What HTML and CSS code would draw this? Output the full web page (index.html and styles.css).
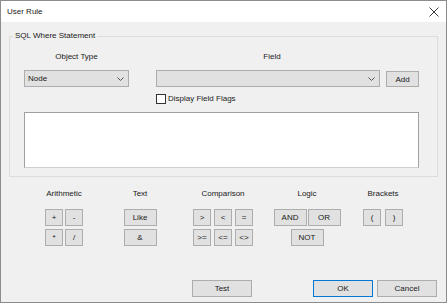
FILE: index.html
```html
<!DOCTYPE html>
<html lang="en">
<head>
    <meta charset="UTF-8">
    <title>User Rule</title>
    <link rel="stylesheet" href="styles.css">
</head>
<body>
    <div class="window">
        <div class="titlebar">
            <span class="title">User Rule</span>
            <svg class="close" width="10" height="10" viewBox="0 0 10 10">
                <path d="M0.5 0.5L9.5 9.5M9.5 0.5L0.5 9.5" stroke="#3a3a3a" stroke-width="1" fill="none"/>
            </svg>
        </div>
        <div class="content">
            <fieldset class="group">
                <legend>SQL Where Statement</legend>
                <div class="labels">
                    <span class="lbl-type">Object Type</span>
                    <span class="lbl-field">Field</span>
                </div>
                <div class="combos">
                    <div class="combo type">
                        <span>Node</span>
                        <svg width="7" height="4" viewBox="0 0 7 4"><path d="M0.5 0.5L3.5 3.5L6.5 0.5" stroke="#555" fill="none"/></svg>
                    </div>
                    <div class="combo field">
                        <span></span>
                        <svg width="7" height="4" viewBox="0 0 7 4"><path d="M0.5 0.5L3.5 3.5L6.5 0.5" stroke="#555" fill="none"/></svg>
                    </div>
                    <button class="btn add">Add</button>
                </div>
                <label class="flags"><span class="check"></span>Display Field Flags</label>
                <div class="sqlbox"></div>
            </fieldset>

            <div class="ops">
                <div class="op-group arith">
                    <p class="op-title">Arithmetic</p>
                    <div class="op-grid cols-2">
                        <button class="btn op">+</button>
                        <button class="btn op">-</button>
                        <button class="btn op">*</button>
                        <button class="btn op">/</button>
                    </div>
                </div>
                <div class="op-group text">
                    <p class="op-title">Text</p>
                    <div class="op-grid cols-1">
                        <button class="btn wide">Like</button>
                        <button class="btn wide">&amp;</button>
                    </div>
                </div>
                <div class="op-group compare">
                    <p class="op-title">Comparison</p>
                    <div class="op-grid cols-3">
                        <button class="btn op">&gt;</button>
                        <button class="btn op">&lt;</button>
                        <button class="btn op">=</button>
                        <button class="btn op">&gt;=</button>
                        <button class="btn op">&lt;=</button>
                        <button class="btn op">&lt;&gt;</button>
                    </div>
                </div>
                <div class="op-group logic">
                    <p class="op-title">Logic</p>
                    <div class="logic-row">
                        <button class="btn wide">AND</button>
                        <button class="btn wide">OR</button>
                    </div>
                    <div class="logic-row">
                        <button class="btn wide">NOT</button>
                    </div>
                </div>
                <div class="op-group brackets">
                    <p class="op-title">Brackets</p>
                    <div class="op-grid cols-2 loose">
                        <button class="btn op">(</button>
                        <button class="btn op">)</button>
                    </div>
                </div>
            </div>

            <div class="actions">
                <button class="btn action test">Test</button>
                <button class="btn action ok">OK</button>
                <button class="btn action">Cancel</button>
            </div>
        </div>
    </div>
</body>
</html>
```

FILE: styles.css
```css
* {
    margin: 0;
    padding: 0;
    box-sizing: border-box;
}
body {
    font-family: "Liberation Sans", Arial, sans-serif;
    font-size: 8px;
    color: #1a1a1a;
    background-color: #f0f0f0;
}
.window {
    width: 447px;
    height: 303px;
    border: 1px solid #8c8c8c;
    background-color: #f0f0f0;
    display: flex;
    flex-direction: column;
}
.titlebar {
    height: 21px;
    background-color: white;
    display: flex;
    align-items: center;
    justify-content: space-between;
    padding: 0 7px 0 6px;
}
.title {
    font-size: 8px;
    color: #222;
}
.content {
    flex: 1;
    padding: 0 8px;
}
.group {
    margin-top: 8px;
    border: 1px solid #dcdcdc;
    padding: 0 0 8px 0;
}
.group legend {
    margin-left: 3px;
    padding: 0 2px;
    line-height: 12px;
}
.labels {
    display: flex;
    margin-top: 9px;
    padding-left: 14px;
    line-height: 12px;
}
.lbl-type {
    width: 105px;
    text-align: center;
}
.lbl-field {
    width: 224px;
    margin-left: 27px;
    padding-left: 8px;
    text-align: center;
}
.combos {
    display: flex;
    align-items: flex-start;
    margin-top: 7px;
    padding-left: 14px;
}
.combo {
    height: 17px;
    background-color: #e1e1e1;
    border: 1px solid #adadad;
    display: flex;
    align-items: center;
    justify-content: space-between;
    padding: 0 4px 0 3px;
}
.combo.type {
    width: 105px;
}
.combo.field {
    width: 224px;
    margin-left: 27px;
}
.btn {
    font-family: "Liberation Sans", Arial, sans-serif;
    font-size: 8px;
    color: #1a1a1a;
    background-color: #e1e1e1;
    border: 1px solid #adadad;
}
.add {
    width: 33px;
    height: 16px;
    margin: 1px 0 0 6px;
}
.flags {
    display: flex;
    align-items: center;
    margin: 6px 0 0 146px;
    height: 11px;
}
.check {
    width: 10px;
    height: 10px;
    border: 1px solid #333;
    background-color: white;
    margin-right: 2px;
}
.sqlbox {
    margin: 8px 0 0 14px;
    width: 395px;
    height: 56px;
    background-color: white;
    border: 1px solid #a0a0a0;
    border-bottom-color: #cfcfcf;
}
.ops {
    display: flex;
    margin: 11px 0 0 25px;
}
.op-group {
    display: flex;
    flex-direction: column;
    align-items: center;
}
.arith {
    width: 60px;
}
.text {
    width: 92px;
}
.compare {
    width: 74px;
}
.logic {
    width: 94px;
}
.brackets {
    width: 58px;
}
.op-title {
    line-height: 12px;
    margin-bottom: 9px;
}
.op-grid {
    display: grid;
    column-gap: 2px;
    row-gap: 3px;
}
.cols-1 {
    grid-template-columns: 33px;
}
.cols-2 {
    grid-template-columns: 18px 18px;
}
.cols-3 {
    grid-template-columns: 18px 18px 18px;
    column-gap: 3px;
}
.loose {
    column-gap: 4px;
}
.op {
    height: 17px;
}
.wide {
    width: 33px;
    height: 17px;
}
.logic-row {
    display: flex;
    gap: 1px;
    margin-bottom: 3px;
}
.actions {
    display: flex;
    margin: 31px 0 0 183px;
}
.action {
    width: 60px;
    height: 17px;
}
.ok {
    margin-left: 61px;
    margin-right: 4px;
    border-color: #0078d7;
}
```
